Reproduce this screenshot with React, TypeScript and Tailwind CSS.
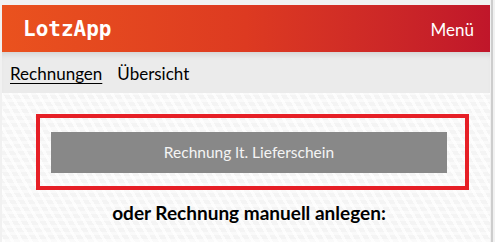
import React from 'react';

const pattern =
  'bg-[#f4f4f4] bg-[repeating-linear-gradient(60deg,rgba(255,255,255,0.75)_0px,rgba(255,255,255,0.75)_3px,transparent_3px,transparent_8px),repeating-linear-gradient(0deg,rgba(255,255,255,0.5)_0px,rgba(255,255,255,0.5)_3px,transparent_3px,transparent_7px)]';

const App: React.FC = () => {
  return (
    <div className="flex w-[495px] h-[242px] overflow-hidden bg-[#f1f1f1] font-['Lato',sans-serif]">
      <div className="ml-[2px] w-[488px] pt-[5px] flex flex-col">
        <header className="h-[47px] flex items-center justify-between bg-gradient-to-r from-[#ea521e] via-[#dd3a21] to-[#c0162a] pl-[21px] pr-[16px]">
          <div className="font-['DejaVu_Sans_Mono',monospace] font-bold text-[21px] text-white leading-none mt-[2px]">
            LotzApp
          </div>
          <div className="text-white text-[17px] leading-none mt-[2px]">Menü</div>
        </header>
        <nav className="h-[41px] flex items-center gap-[15px] pl-[8px] bg-[#ebebeb] shadow-[inset_0_6px_6px_-4px_rgba(0,0,0,0.12)] text-[17px] text-black">
          <span className="underline underline-offset-[3px] mt-[3px]">Rechnungen</span>
          <span className="mt-[3px]">Übersicht</span>
        </nav>
        <main className={`flex-1 ${pattern} pt-[21px]`}>
          <div className="ml-[34px] w-[433px] h-[76px] border-[4px] border-[#e61f26] pl-[11px] pr-[18px] pt-[14px]">
            <button className="w-full h-[41px] bg-[#888888] text-[#f4f4f4] text-[15.5px] flex items-center justify-center">
              Rechnung lt. Lieferschein
            </button>
          </div>
          <div className="mt-[13px] pl-[6px] text-center font-bold text-[19px] text-black leading-none">
            oder Rechnung manuell anlegen:
          </div>
        </main>
      </div>
      <div className="w-[5px] flex">
        <div className="ml-[1px] w-[2px] h-full bg-[#cdcdcd]" />
      </div>
    </div>
  );
};

export default App;
